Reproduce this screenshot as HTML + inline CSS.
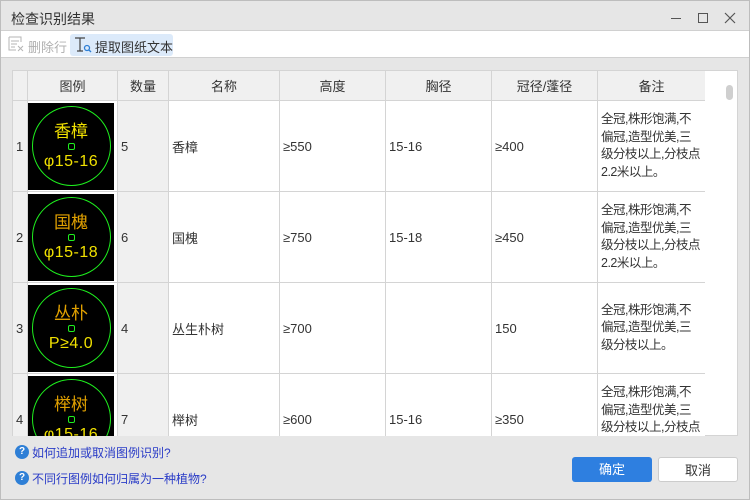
<!DOCTYPE html>
<html><head><meta charset="utf-8"><style>
*{box-sizing:border-box;margin:0;padding:0}
body{width:750px;height:500px;background:#e6e6e6;font-family:"Liberation Sans","Noto Sans CJK SC",sans-serif;font-size:13px;color:#333;position:relative;overflow:hidden}
.frame{position:absolute;left:0;top:0;width:750px;height:500px;border:1px solid #bdbdbd;pointer-events:none}
.abs{position:absolute}
.title{left:11px;top:9px;font-size:14px;color:#333}
.tb{left:0;top:30px;width:750px;height:28px;background:#fff;border-top:1px solid #d0d0d0;border-bottom:1px solid #d0d0d0}
table{position:absolute;border-collapse:collapse;background:#fff;table-layout:fixed}
td,th{border:1px solid #d4d4d4;font-weight:normal;font-size:13px;color:#333;text-align:left;padding:0 3px;vertical-align:middle;overflow:hidden}
th{background:#f0f0f0;text-align:center;height:30px}
td{height:91px}
td.n{background:#f0f0f0;padding:0 3px}
td.q{background:#f0f0f0}
.leg{width:86px;height:87px;background:#000;position:relative;margin-left:-1px}
.leg .c{position:absolute;left:4px;top:3px;width:79px;height:80px;border:1px solid #1ef01e;border-radius:50%}
.leg .t1{position:absolute;left:0;width:86px;top:14px;text-align:center;color:#f0e000;font-size:17px}
.leg .sq{position:absolute;left:40px;top:40px;width:7px;height:7px;border:1.5px solid #1ef01e;border-radius:2px}
.leg .t2{position:absolute;left:0;width:86px;top:50px;text-align:center;color:#f0e000;font-size:16px;letter-spacing:0.5px}
.note{line-height:17.5px;font-size:12.5px;letter-spacing:-0.5px;padding:0 0 0 3px;white-space:nowrap}
.btn{height:25px;border-radius:3px;text-align:center;line-height:25px;font-size:13px}
.q1{width:14px;height:14px;border-radius:50%;background:#2e7fd6;color:#fff;font-size:10px;text-align:center;line-height:14px;font-weight:bold}
.lk{color:#2a3cc7;font-size:12px}
</style></head><body>
<div class="abs title">检查识别结果</div>
<div class="abs" style="left:671px;top:18px;width:10px;height:1px;background:#555"></div>
<div class="abs" style="left:698px;top:13px;width:10px;height:10px;border:1px solid #555"></div>
<svg class="abs" style="left:724px;top:12px" width="12" height="12"><path d="M1 1L11 11M11 1L1 11" stroke="#555" stroke-width="1.2"/></svg>
<div class="abs tb"></div>
<svg class="abs" style="left:8px;top:36px" width="16" height="16"><path d="M1 1h12v5M1 1v13h7M3 5h8M3 8h6M3 11h4M10 10l5 5M15 10l-5 5" stroke="#b5b5b5" fill="none"/></svg>
<div class="abs" style="left:28px;top:37px;color:#b0b0b0">删除行</div>
<div class="abs" style="left:70px;top:34px;width:103px;height:22px;background:#dceafa;border-radius:3px"></div>
<svg class="abs" style="left:74px;top:36px" width="18" height="18"><path d="M1 2h10M6 2v13M3 15h6" stroke="#444" fill="none" stroke-width="1.2"/><circle cx="13" cy="12" r="2.5" stroke="#2e7fd6" fill="none" stroke-width="1.3"/><path d="M15 14l2 2" stroke="#2e7fd6" stroke-width="1.3"/></svg>
<div class="abs" style="left:95px;top:37px;color:#333">提取图纸文本</div>
<div class="abs" style="left:12px;top:70px;width:726px;height:366px;background:#fff;border:1px solid #d4d4d4"></div>
<div class="abs" style="left:726px;top:85px;width:7px;height:15px;background:#cfcfcf;border-radius:4px"></div>
<div class="abs" style="left:12px;top:70px;width:693px;height:366px;overflow:hidden">
<table style="left:0;top:0;width:693px">
<colgroup><col style="width:15px"><col style="width:90px"><col style="width:51px"><col style="width:111px"><col style="width:106px"><col style="width:106px"><col style="width:106px"><col style="width:108px"></colgroup>
<tr><th></th><th>图例</th><th>数量</th><th>名称</th><th>高度</th><th>胸径</th><th>冠径/蓬径</th><th>备注</th></tr>
<tr><td class="n">1</td><td style="padding:1px"><div class="leg"><div class="c"></div><div class="t1">香樟</div><div class="sq"></div><div class="t2">φ15-16</div></div></td><td class="q">5</td><td>香樟</td><td>≥550</td><td>15-16</td><td>≥400</td><td class="note">全冠,株形饱满,不<br>偏冠,造型优美,三<br>级分枝以上,分枝点<br>2.2米以上。</td></tr>
<tr><td class="n">2</td><td style="padding:1px"><div class="leg"><div class="c"></div><div class="t1" style="color:#e0a000">国槐</div><div class="sq"></div><div class="t2">φ15-18</div></div></td><td class="q">6</td><td>国槐</td><td>≥750</td><td>15-18</td><td>≥450</td><td class="note">全冠,株形饱满,不<br>偏冠,造型优美,三<br>级分枝以上,分枝点<br>2.2米以上。</td></tr>
<tr><td class="n">3</td><td style="padding:1px"><div class="leg"><div class="c"></div><div class="t1" style="color:#e0a000">丛朴</div><div class="sq"></div><div class="t2">P≥4.0</div></div></td><td class="q">4</td><td>丛生朴树</td><td>≥700</td><td></td><td>150</td><td class="note">全冠,株形饱满,不<br>偏冠,造型优美,三<br>级分枝以上。</td></tr>
<tr><td class="n">4</td><td style="padding:1px"><div class="leg"><div class="c"></div><div class="t1" style="color:#e0a000">榉树</div><div class="sq"></div><div class="t2">φ15-16</div></div></td><td class="q">7</td><td>榉树</td><td>≥600</td><td>15-16</td><td>≥350</td><td class="note">全冠,株形饱满,不<br>偏冠,造型优美,三<br>级分枝以上,分枝点<br>2.2米以上。</td></tr>
</table></div>
<div class="abs q1" style="left:15px;top:445px">?</div>
<div class="abs lk" style="left:32px;top:444px">如何追加或取消图例识别?</div>
<div class="abs q1" style="left:15px;top:471px">?</div>
<div class="abs lk" style="left:32px;top:470px">不同行图例如何归属为一种植物?</div>
<div class="abs btn" style="left:572px;top:457px;width:80px;background:#2e7fe0;color:#fff">确定</div>
<div class="abs btn" style="left:658px;top:457px;width:80px;background:#fff;border:1px solid #ccc">取消</div>
<div class="frame"></div>
</body></html>
